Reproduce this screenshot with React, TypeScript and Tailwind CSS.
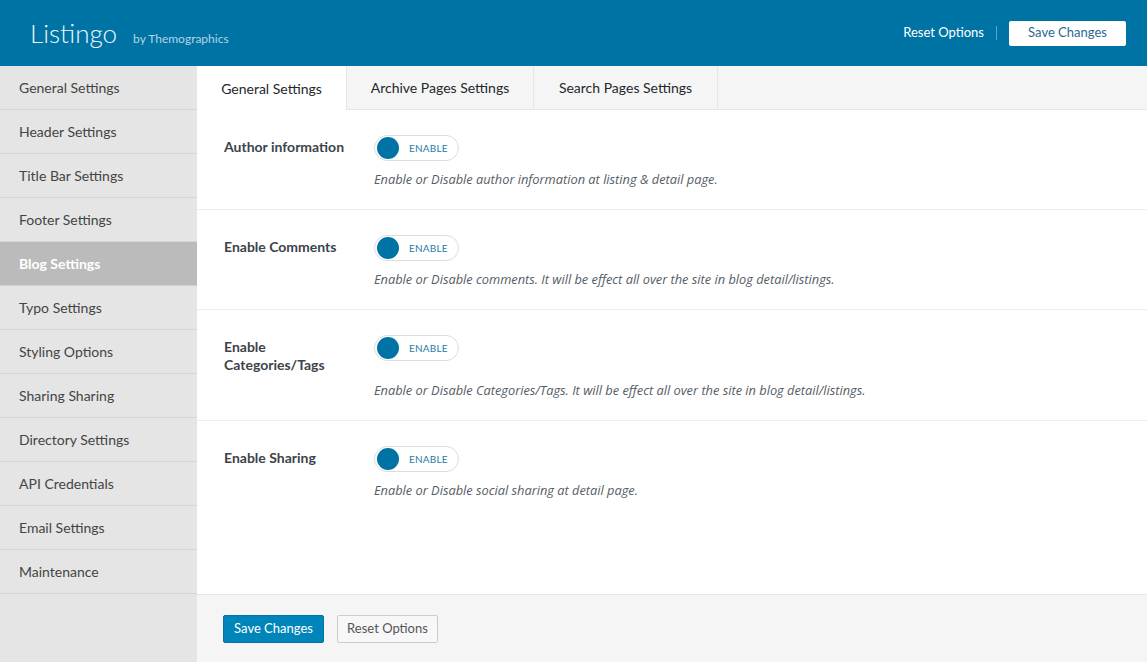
const menu = [
  "General Settings",
  "Header Settings",
  "Title Bar Settings",
  "Footer Settings",
  "Blog Settings",
  "Typo Settings",
  "Styling Options",
  "Sharing Sharing",
  "Directory Settings",
  "API Credentials",
  "Email Settings",
  "Maintenance",
];

const tabs = ["General Settings", "Archive Pages Settings", "Search Pages Settings"];

const options = [
  {
    label: "Author information",
    desc: "Enable or Disable author information at listing & detail page.",
    h: "h-[100px]",
  },
  {
    label: "Enable Comments",
    desc: "Enable or Disable comments. It will be effect all over the site in blog detail/listings.",
    h: "h-[100px]",
  },
  {
    label: "Enable Categories/Tags",
    desc: "Enable or Disable Categories/Tags. It will be effect all over the site in blog detail/listings.",
    h: "h-[111px]",
  },
  {
    label: "Enable Sharing",
    desc: "Enable or Disable social sharing at detail page.",
    h: "h-[100px]",
  },
];

function Toggle() {
  return (
    <div className="flex items-center w-[85px] h-[26px] rounded-full border border-[#dddddd] bg-white pl-[2px]">
      <span className="w-[22px] h-[22px] rounded-full bg-[#0073a5]" />
      <span className="ml-[10px] text-[10px] tracking-[0.2px] text-[#2a7aa6]">ENABLE</span>
    </div>
  );
}

export default function App() {
  return (
    <div className="w-[1147px] h-[662px] flex flex-col bg-white text-[#23282d] font-['Lato','Open_Sans',sans-serif] overflow-hidden">
      {/* Header */}
      <header className="h-[66px] shrink-0 bg-[#0073a5] flex items-center pl-[30px] pr-[21px]">
        <h1 className="text-[26px] font-light text-[#eef6fa] leading-none">Listingo</h1>
        <span className="ml-[16px] mt-[11px] text-[12px] text-[#b5d3e3]">by Themographics</span>
        <div className="ml-auto flex items-center">
          <button className="text-[13px] text-white">Reset Options</button>
          <span className="mx-[12px] w-px h-[14px] bg-[#5fa2c4]" />
          <button className="w-[117px] h-[25px] bg-white rounded-[2px] text-[13px] text-[#2a6a8e]">
            Save Changes
          </button>
        </div>
      </header>

      <div className="flex flex-1 min-h-0">
        {/* Sidebar */}
        <aside className="w-[197px] shrink-0 bg-[#e5e5e5]">
          {menu.map((m) => {
            const active = m === "Blog Settings";
            return (
              <div
                key={m}
                className={
                  active
                    ? "h-[44px] flex items-center pl-[19px] border-b border-[#d0d0d0] bg-[#bbbbbb] text-white font-bold text-[14px]"
                    : "h-[44px] flex items-center pl-[19px] border-b border-[#d5d5d5] text-[#444444] text-[14px]"
                }
              >
                {m}
              </div>
            );
          })}
        </aside>

        {/* Main */}
        <main className="flex-1 flex flex-col min-w-0">
          <div className="h-[44px] shrink-0 bg-[#f5f5f5] border-b border-[#e5e5e5] flex">
            {tabs.map((t, i) => (
              <div
                key={t}
                className={
                  i === 0
                    ? "w-[149px] h-[44px] flex items-center justify-center bg-white text-[14px] text-[#23282d]"
                    : i === 1
                    ? "w-[188px] h-[43px] flex items-center justify-center border-l border-r border-[#e5e5e5] text-[14px] text-[#23282d]"
                    : "w-[184px] h-[43px] flex items-center justify-center border-r border-[#e5e5e5] text-[14px] text-[#23282d]"
                }
              >
                {t}
              </div>
            ))}
          </div>

          <div className="flex-1">
            {options.map((o, i) => (
              <div
                key={o.label}
                className={`${o.h} flex pl-[27px] pt-[25px] ${i < 3 ? "border-b border-[#eeeeee]" : ""}`}
              >
                <div className="w-[150px] shrink-0 text-[14px] font-bold text-[#3c434a] leading-[18px] pt-[3px] pr-[20px]">
                  {o.label}
                </div>
                <div className="flex flex-col">
                  <Toggle />
                  <p
                    className={`${i === 2 ? "mt-[20px]" : "mt-[9px]"} font-['Open_Sans',sans-serif] text-[12.8px] italic text-[#555d66]`}
                  >
                    {o.desc}
                  </p>
                </div>
              </div>
            ))}
          </div>

          <footer className="h-[68px] shrink-0 bg-[#f5f5f5] border-t border-[#e5e5e5] flex items-center pl-[26px] gap-[13px]">
            <button className="w-[101px] h-[28px] bg-[#0085ba] border border-[#0073aa] rounded-[2px] text-white text-[13px]">
              Save Changes
            </button>
            <button className="w-[101px] h-[28px] bg-[#f7f7f7] border border-[#cccccc] rounded-[2px] text-[#555555] text-[13px]">
              Reset Options
            </button>
          </footer>
        </main>
      </div>
    </div>
  );
}
